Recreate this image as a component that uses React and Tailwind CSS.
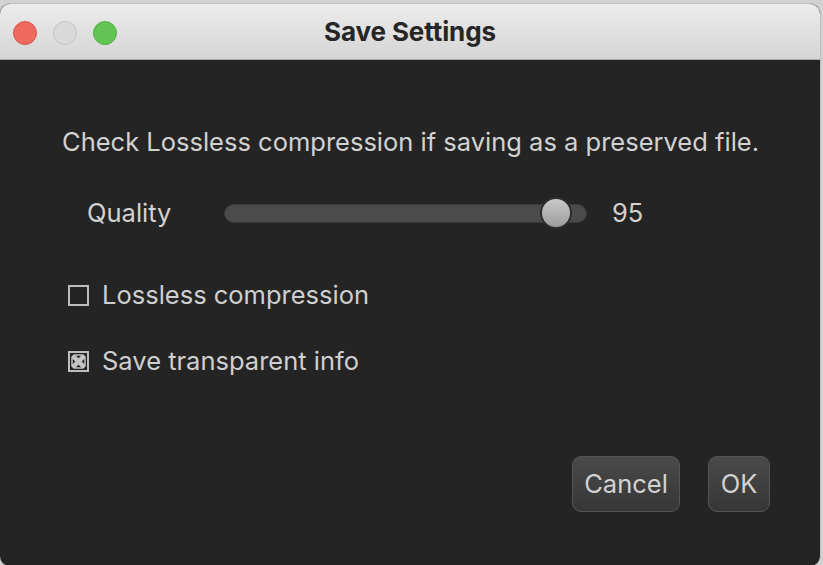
import { useState } from "react";

function TrafficLights() {
  return (
    <div className="absolute left-[13px] top-[17px] flex gap-[16px]">
      <span className="w-[24px] h-[24px] rounded-full bg-[#ee6a5e] border border-[#d5574b]" />
      <span className="w-[24px] h-[24px] rounded-full bg-[#d9d9d9] border border-[#c4c4c4]" />
      <span className="w-[24px] h-[24px] rounded-full bg-[#62c554] border border-[#52ad45]" />
    </div>
  );
}

function Checkbox({ checked, label }) {
  return (
    <label className="h-[30px] flex items-center gap-[13px] text-[25.5px] text-[#cfcfcf]">
      <span className="w-[21px] h-[21px] border-2 border-[#bdbdbd] flex items-center justify-center">
        {checked && (
          <svg width="15" height="15" viewBox="0 0 15 15">
            <path d="M1.5 1.5L13.5 13.5M13.5 1.5L1.5 13.5" stroke="#c4c4c4" strokeWidth="4.5" />
            <path d="M4 1h7M4 14h7M1 4v7M14 4v7" stroke="#c4c4c4" strokeWidth="1.5" />
          </svg>
        )}
      </span>
      <span>{label}</span>
    </label>
  );
}

export default function App() {
  const [quality] = useState(95);

  return (
    <div className="w-[823px] h-[565px] bg-[#d2d2d2] overflow-hidden" style={{ fontFamily: "Inter, 'Noto Sans', sans-serif" }}>
      <div className="ml-[-1px] mt-[3px] w-[822px] h-[564px] rounded-[11px] overflow-hidden flex flex-col bg-[#242424] border border-[#bdbdbd]">
        {/* Title bar */}
        <div className="relative h-[56px] shrink-0 bg-gradient-to-b from-[#ececec] to-[#d5d5d5] border-b border-[#a9a9a9] flex items-center justify-center">
          <TrafficLights />
          <span className="text-[26px] font-bold text-[#262626] tracking-[-0.1px]">Save Settings</span>
        </div>

        {/* Body */}
        <div className="flex-1 flex flex-col px-[62px] pt-[67px]">
          <p className="h-[30px] flex items-center whitespace-nowrap text-[25.5px] text-[#d2d2d2] leading-none">
            Check Lossless compression if saving as a preserved file.
          </p>

          <div className="h-[36px] flex items-center mt-[38px] pl-[25px]">
            <span className="text-[25.5px] text-[#d2d2d2] w-[137px]">Quality</span>
            <div className="relative w-[363px] h-[19px] rounded-full bg-[#4b4b4b] border border-[#3a3a3a]">
              <span className="absolute top-1/2 -translate-y-1/2 left-[315px] w-[32px] h-[32px] rounded-full bg-gradient-to-b from-[#c9c9c9] to-[#9c9c9c] border-2 border-[#2e2e2e]" />
            </div>
            <span className="ml-[25px] text-[25.5px] text-[#d2d2d2]">{quality}</span>
          </div>

          <div className="flex flex-col gap-[36px] mt-[49px] pl-[6px]">
            <Checkbox label="Lossless compression" />
            <Checkbox checked label="Save transparent info" />
          </div>

          <div className="flex justify-end gap-[28px] mt-[80px] mr-[-12px]">
            <button className="w-[108px] h-[56px] rounded-[9px] bg-gradient-to-b from-[#4a4a4a] to-[#363636] border border-[#555] text-[25.5px] text-[#d2d2d2]">
              Cancel
            </button>
            <button className="w-[62px] h-[56px] rounded-[9px] bg-gradient-to-b from-[#4a4a4a] to-[#363636] border border-[#555] text-[25.5px] text-[#d2d2d2]">
              OK
            </button>
          </div>
        </div>
      </div>
    </div>
  );
}
